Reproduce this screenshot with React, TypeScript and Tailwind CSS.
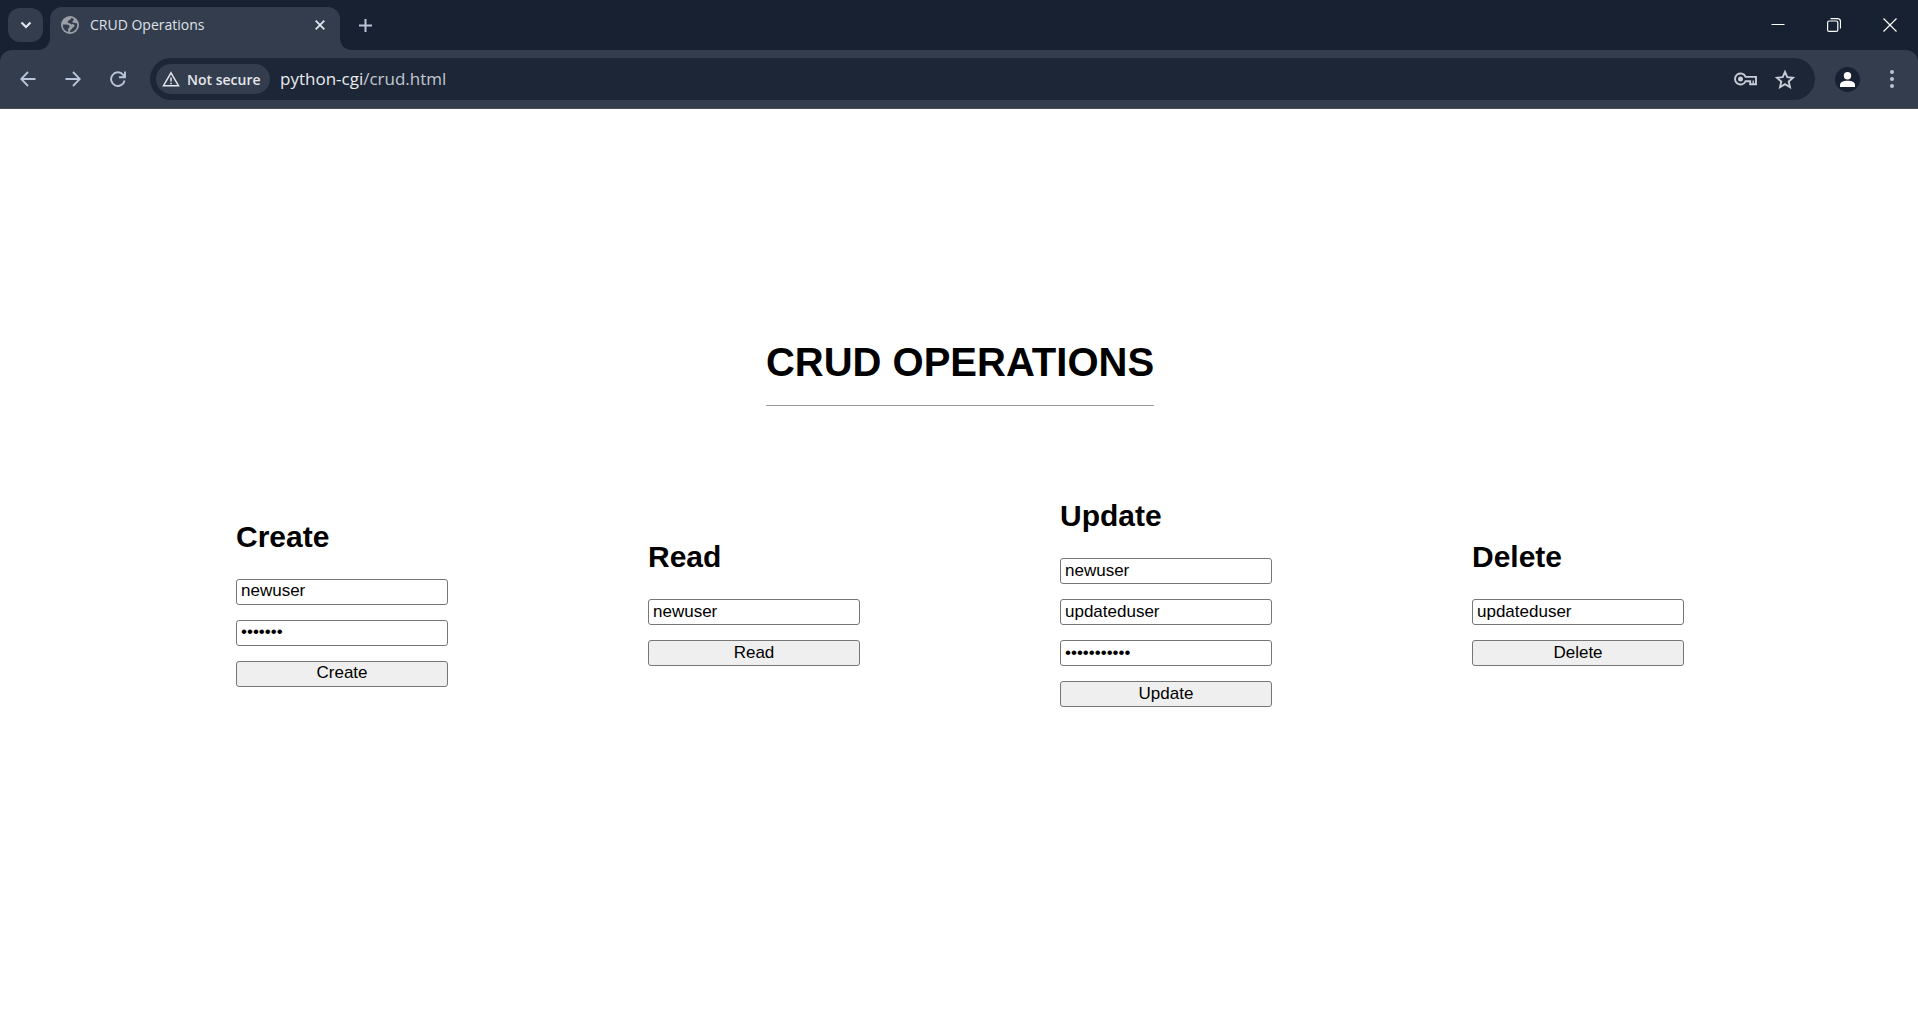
import type { ReactNode } from "react";

type FieldSpec = { label: string; type: "text" | "password"; value: string };
type FormSpec = { title: string; fields: FieldSpec[] };

const forms: FormSpec[] = [
  {
    title: "Create",
    fields: [
      { label: "Username", type: "text", value: "newuser" },
      { label: "Password", type: "password", value: "newpass" },
    ],
  },
  { title: "Read", fields: [{ label: "Username", type: "text", value: "newuser" }] },
  {
    title: "Update",
    fields: [
      { label: "Current username", type: "text", value: "newuser" },
      { label: "New username", type: "text", value: "updateduser" },
      { label: "New password", type: "password", value: "updatedpass" },
    ],
  },
  { title: "Delete", fields: [{ label: "Username", type: "text", value: "updateduser" }] },
];

function IconButton({ label, className, children }: { label: string; className: string; children: ReactNode }) {
  return (
    <button type="button" aria-label={label} className={`flex shrink-0 items-center justify-center ${className}`}>
      {children}
    </button>
  );
}

function TabFlare({ flip }: { flip?: boolean }) {
  return (
    <svg width="12" height="12" viewBox="0 0 12 12" className={flip ? "-scale-x-100 self-end" : "self-end"} aria-hidden="true">
      <path d="M12 0v12H0C7 12 12 7 12 0Z" fill="#343d4d" />
    </svg>
  );
}

function GlobeIcon() {
  return (
    <svg width="18" height="18" viewBox="0 0 18 18" aria-hidden="true">
      <circle cx="9" cy="9" r="9" fill="#9aa0a6" />
      <path
        d="M10.800 2C9.500 2.600 9.700 3.600 8.600 4C7.200 4.500 6.600 5.200 6.900 6.600C7.200 7.800 9 7.200 10 8C11 8.900 12.300 8.300 13.200 8.800C14.300 9.500 13.500 10.900 12.400 11.200C11.200 11.500 11.300 12.900 10.200 13.400C9.300 13.800 8.900 14.800 8.900 16.200C13 16.200 16.200 13 16.200 9C16.200 8.300 16.100 7.700 15.900 7C14.800 7.500 13.900 6.900 12.600 6.800C11.500 6.700 10.900 5.800 11.800 5C12.700 4.300 12.900 3.700 12.600 2.700Z"
        fill="#343d4d"
      />
      <path
        d="M1.900 8.500H5.200C7 8.500 8.600 9.300 8.700 10.800C8.700 12 7.300 11.800 7.200 13V15.900C4 15.200 1.500 12.300 1.900 8.500Z"
        fill="#343d4d"
      />
    </svg>
  );
}

function TabStrip() {
  return (
    <div className="flex h-[50px] items-end bg-[#182131] pl-2">
      <IconButton label="Search tabs" className="mb-2 h-[34px] w-[35px] rounded-xl bg-[#343d4d]">
        <svg width="12" height="8" viewBox="0 0 12 8" fill="none" stroke="#e3e6ec" strokeWidth="2.200" aria-hidden="true">
          <path d="M1.500 1.500 6 6l4.500-4.500" />
        </svg>
      </IconButton>
      <div className="-ml-[5px] flex">
        <TabFlare />
        <div className="flex h-[43px] w-[290px] items-center rounded-t-xl bg-[#343d4d] pr-3 pb-[7px] pl-[11px]">
          <GlobeIcon />
          <span className="ml-[11px] grow text-[14px] leading-5 text-[#dfe2e8]">CRUD Operations</span>
          <IconButton label="Close tab" className="size-4">
            <svg width="10" height="10" viewBox="0 0 10 10" stroke="#e3e6ec" strokeWidth="1.800" aria-hidden="true">
              <path d="m.7.7 8.600 8.600M9.300.7.7 9.300" />
            </svg>
          </IconButton>
        </div>
        <TabFlare flip />
      </div>
      <IconButton label="New tab" className="mb-2 ml-[5px] h-[34px] w-[17px]">
        <svg width="13" height="13" viewBox="0 0 13 13" stroke="#b9c5da" strokeWidth="2" aria-hidden="true">
          <path d="M6.500 0v13M0 6.500h13" />
        </svg>
      </IconButton>
      <div className="ml-auto flex self-stretch">
        <IconButton label="Minimize" className="w-14">
          <svg width="14" height="14" viewBox="0 0 14 14" stroke="#fff" aria-hidden="true">
            <path d="M.5 6.500h13" />
          </svg>
        </IconButton>
        <IconButton label="Restore" className="w-14">
          <svg width="14" height="14" viewBox="0 0 14 14" fill="none" stroke="#fff" strokeWidth="1.200" aria-hidden="true">
            <rect x=".6" y="3" width="10.200" height="10.400" rx="1.500" />
            <path d="M3.500.6h7a3 3 0 0 1 3 3v7" />
          </svg>
        </IconButton>
        <IconButton label="Close" className="w-14">
          <svg width="14" height="14" viewBox="0 0 14 14" stroke="#fff" strokeWidth="1.200" aria-hidden="true">
            <path d="m.5.5 13 13M13.500.5l-13 13" />
          </svg>
        </IconButton>
      </div>
    </div>
  );
}

function AddressBar() {
  return (
    <div className="bg-[#182131]">
      <div className="flex h-[59px] items-center rounded-t-xl border-b border-[#4a4d54] bg-[#343d4d] pl-[5px]">
        <IconButton label="Back" className="size-[45px]">
          <svg width="16" height="16" viewBox="0 0 16 16" fill="none" stroke="#b9c5da" strokeWidth="1.800" aria-hidden="true">
            <path d="M15.500 8H1.500M8 1 1.200 8 8 15" />
          </svg>
        </IconButton>
        <IconButton label="Forward" className="size-[45px]">
          <svg width="16" height="16" viewBox="0 0 16 16" fill="none" stroke="#b9c5da" strokeWidth="1.800" aria-hidden="true">
            <path d="M.5 8h14M8 1l6.800 7L8 15" />
          </svg>
        </IconButton>
        <IconButton label="Reload" className="size-[45px]">
          <svg width="16" height="16" viewBox="0 0 16 16" fill="none" stroke="#b9c5da" strokeWidth="1.900" aria-hidden="true">
            <path d="M14.600 9.500A6.800 6.800 0 1 1 13.200 3.800L14.500 5.300M15 .5v5.800H9" />
          </svg>
        </IconButton>
        <div className="ml-[10px] flex h-[42px] grow items-center rounded-full bg-[#1d2636] pr-2.5 pl-1.5">
          <button
            type="button"
            className="flex h-[30px] w-[114px] items-center rounded-full bg-[#343d4d] pl-[6px] text-[14px] font-semibold text-[#e3e6ec]"
          >
            <svg width="18" height="16" viewBox="0 0 18 16" fill="none" stroke="#e3e6ec" strokeWidth="1.500" aria-hidden="true">
              <path d="M9 1.800 16.500 14.700H1.500ZM9 6.500v4M9 11.700v1.500" />
            </svg>
            <span className="ml-[7px] whitespace-nowrap">Not secure</span>
          </button>
          <a href="#crud" className="ml-[10px] text-[17px] leading-6 text-[#e8eaf0]">
            python-cgi<span className="text-[#c3c7d0]">/crud.html</span>
          </a>
          <IconButton label="Manage passwords" className="ml-auto h-10 w-[40px]">
            <svg width="23" height="14" viewBox="0 0 23 14" fill="none" stroke="#c7ccd6" strokeWidth="1.900" aria-hidden="true">
              <path d="M11.600 4.900H22v7.400h-5.800v-3h-4.700A5.500 5.500 0 1 1 11.600 4.900Z" />
              <circle cx="6.500" cy="7" r="2.500" fill="#c7ccd6" stroke="none" />
              <path d="M19.200 8.500v3.500" strokeWidth="1.400" />
            </svg>
          </IconButton>
          <IconButton label="Bookmark" className="h-10 w-[40px]">
            <svg width="20" height="19" viewBox="0 0 20 19" fill="none" stroke="#c7ccd6" strokeWidth="1.900" aria-hidden="true">
              <path d="m10 1.900 2.300 5.300 5.800.5-4.400 3.800 1.300 5.700-5-3-5 3 1.300-5.700L1.900 7.700l5.800-.5Z" />
            </svg>
          </IconButton>
        </div>
        <IconButton label="Profile" className="mx-5 size-[25px] rounded-full bg-[#182131]">
          <svg width="15" height="15" viewBox="0 0 15 15" fill="#fff" aria-hidden="true">
            <circle cx="7.500" cy="3.700" r="3.700" />
            <path d="M0 15v-2c0-3 3.500-4.200 7.500-4.200S15 10 15 13v2Z" />
          </svg>
        </IconButton>
        <IconButton label="Menu" className="mr-[15px] h-10 w-[23px]">
          <svg width="4" height="18" viewBox="0 0 4 18" fill="#b9c5da" aria-hidden="true">
            <circle cx="2" cy="2" r="2" />
            <circle cx="2" cy="9" r="2" />
            <circle cx="2" cy="16" r="2" />
          </svg>
        </IconButton>
      </div>
    </div>
  );
}

function CrudForm({ title, fields }: FormSpec) {
  return (
    <form className="flex w-[212px] flex-col gap-[15px]" onSubmit={(event) => event.preventDefault()}>
      <h2 className="mb-[10px] text-[30px] leading-[34px] font-bold">{title}</h2>
      {fields.map((field) => (
        <input
          key={field.label}
          aria-label={field.label}
          type={field.type}
          defaultValue={field.value}
          className="h-[26px] rounded-[3px] border border-[#767676] bg-white px-1 pb-px text-[17px] leading-5"
        />
      ))}
      <button
        type="submit"
        className="h-[26px] rounded-[3px] border border-[#767676] bg-[#efefef] pb-px text-[17px] leading-5"
      >
        {title}
      </button>
    </form>
  );
}

export default function App() {
  return (
    <div className="flex min-h-screen flex-col bg-white">
      <header className="font-['Open_Sans','Noto_Sans',sans-serif]">
        <TabStrip />
        <AddressBar />
      </header>
      <main className="flex grow flex-col items-center justify-center pb-[79px] pl-0.5 font-['Liberation_Sans',Arial,sans-serif] text-black">
        <h1 className="border-b border-[#9a9a9a] pb-[20px] text-[40px] leading-[46px] font-bold">CRUD OPERATIONS</h1>
        <div className="mt-[93px] flex items-center gap-[200px]">
          {forms.map((form) => (
            <CrudForm key={form.title} {...form} />
          ))}
        </div>
      </main>
    </div>
  );
}
